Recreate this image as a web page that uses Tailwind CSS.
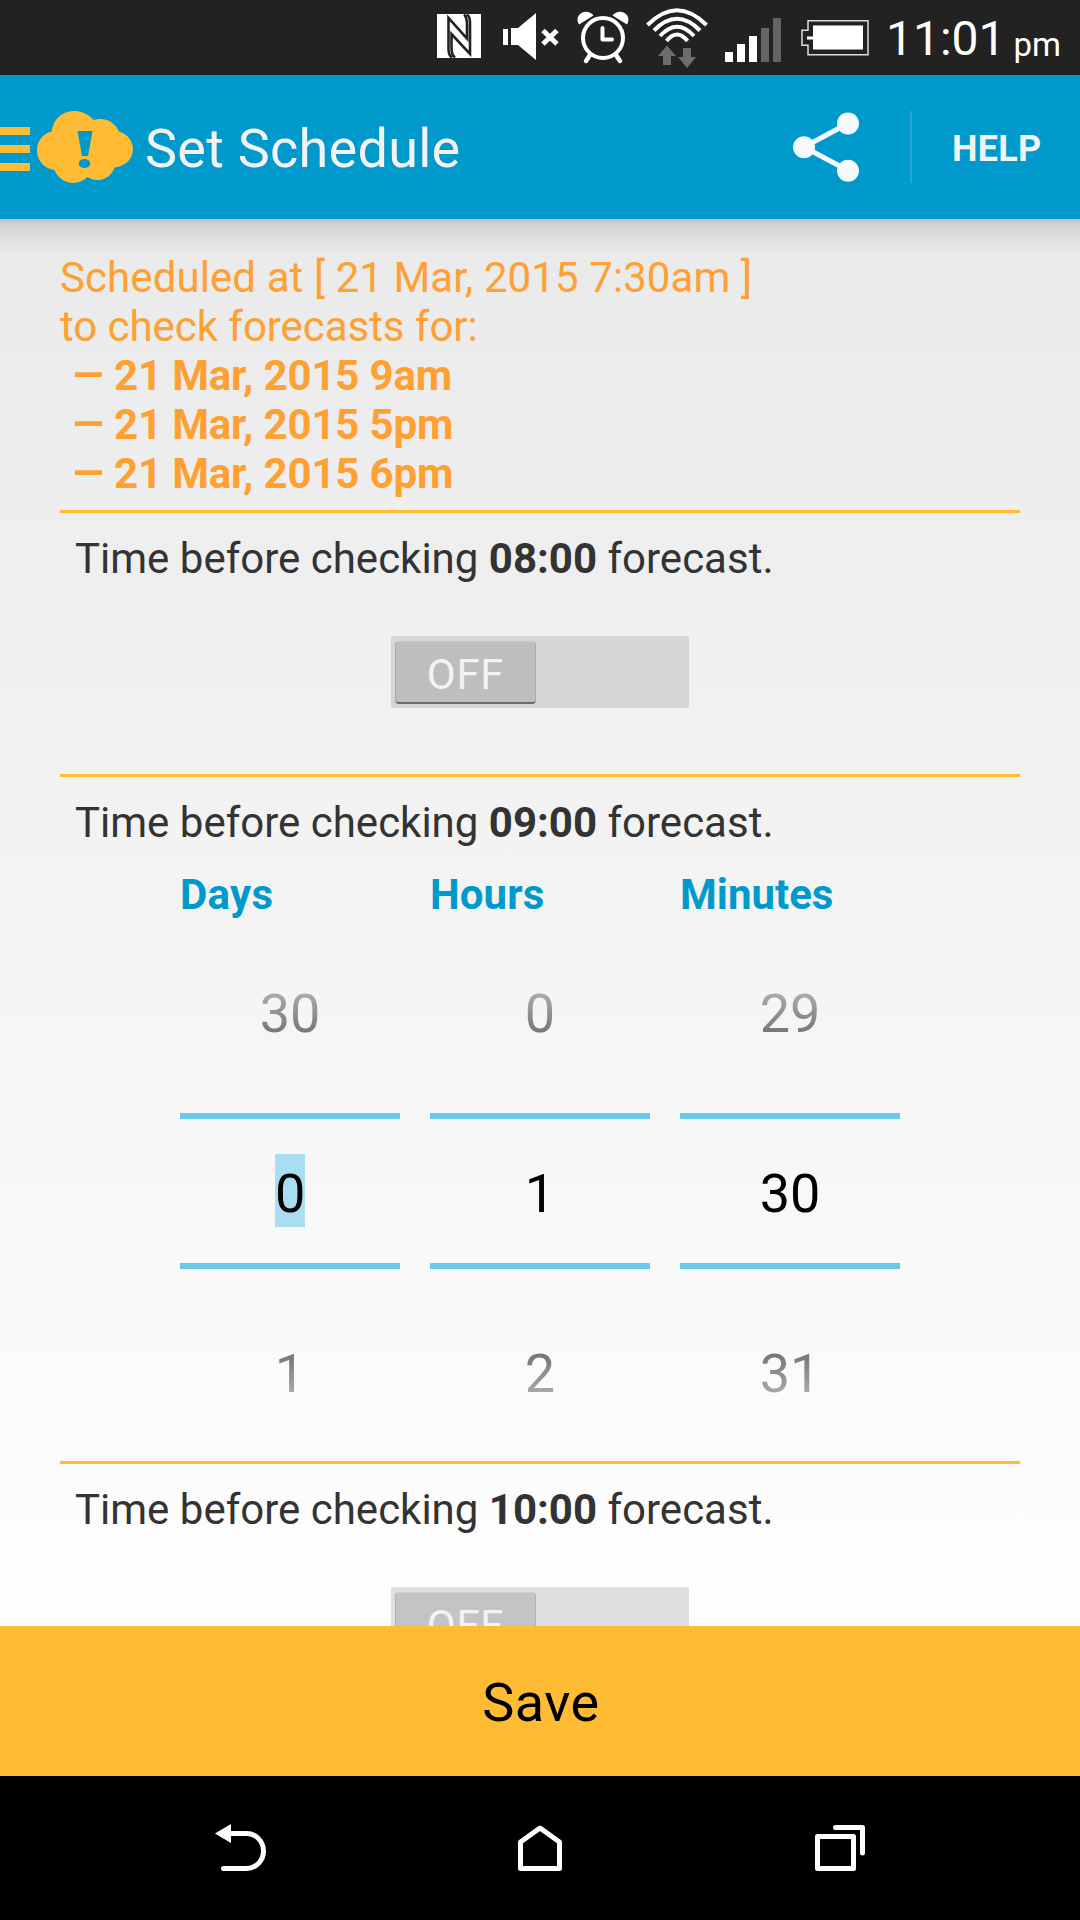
<!DOCTYPE html>
<html lang="en">
<head>
<meta charset="utf-8">
<title>Set Schedule</title>
<script src="https://cdn.jsdelivr.net/npm/@tailwindcss/browser@4"></script>
</head>
<body class="w-[1080px] h-[1920px] overflow-hidden flex flex-col font-['Roboto',sans-serif] text-[42px] leading-[49px] whitespace-nowrap">

<!-- Status bar -->
<header class="h-[75px] shrink-0 bg-[#222] text-white flex items-start">
  <svg class="w-[346px] h-[75px] ml-[437px] shrink-0" viewBox="437 0 346 75" fill="#fff">
    <rect x="437" y="14" width="44" height="44"/>
    <path d="M452 57.500Q448.500 55.500 448.500 49V18L467 38.500V25Q467 17 464 14.500M467 14.500Q470 16.500 470 23V54L451.500 34V48Q451.500 55 455 57.500" fill="none" stroke="#222" stroke-width="2.600"/>
    <path d="M503 29h5v16h-5zM511 28h7L536 13v47L518 45h-7z"/>
    <path d="M543 30.500l14 13.500M557 30.500L543 44" stroke="#fff" stroke-width="5"/>
    <circle cx="603" cy="38" r="20" fill="none" stroke="#fff" stroke-width="4"/>
    <path d="M579 24.500C573 14 587 7 593.500 15.500ZM627 24.500C633 14 619 7 612.500 15.500Z"/>
    <path d="M590 55l-4 6M616 55l4 6" stroke="#fff" stroke-width="4.500" stroke-linecap="round"/>
    <path d="M602.500 28v11.500H612" fill="none" stroke="#fff" stroke-width="4" stroke-linecap="round" stroke-linejoin="round"/>
    <g fill="none" stroke="#fff" stroke-width="4">
      <path d="M647.500 25Q677 -4.500 706.500 25"/><path d="M654 30.500Q677 7 700 30.500"/><path d="M660 36Q677 17.500 694 36"/><path d="M666.500 41Q677 28 687.500 41"/>
    </g>
    <path d="M667 45.500L676 56h-5v9h-8v-9h-5zM683 48h8v9h5l-9 11-9-11h5z" fill="#6d6d6d"/>
    <path d="M725 52h8v10h-8zM737 44h8v18h-8zM749 36h8v26h-8z"/>
    <path d="M761 28h8v34h-8zM773 18h8v44h-8z" fill="#646464"/>
  </svg>
  <svg class="w-[68px] h-[36px] mt-5 ml-[18px] shrink-0" viewBox="801 20 68 36">
    <path d="M808 20.700h60v34h-60v-9.500h-6v-15h6z" fill="none" stroke="#ddd" stroke-width="1.500"/>
    <path d="M813 25.500h50v24h-50v-10h-6v-3h6z" fill="#fff"/>
  </svg>
  <div class="text-[48px] leading-[56px] pt-[11px] ml-[17px]">11:01</div>
  <div class="text-[33px] leading-[42px] pt-[24px] ml-[8px]">pm</div>
</header>

<!-- Action bar -->
<div class="h-[144px] shrink-0 bg-[#0099cc] flex items-center text-[#f3f3f3]">
  <svg class="w-[134px] h-[72px] shrink-0" viewBox="0 111 134 72" fill="#ffbb33">
    <path d="M0 127h30v8H0zM0 145h30v8H0zM0 163h30v8H0z"/>
    <path d="M51.700 131.500C53 119 62 111 74.500 111C82 111 89 114.500 93.500 120C104 117 114.500 121 119 131.500C127 133.500 133 141 133 149C133 159 125 166.500 114.500 167.500C111 179 97.500 183.500 87.500 177C77 187 60 184 54.500 170C45 169 37 161 37 150C37 141 43 133.500 51.700 131.500Z"/>
    <path d="M77.500 131h15L88 156h-6z" fill="#0099cc"/><ellipse cx="84.500" cy="163.500" rx="5.700" ry="4.600" fill="#0099cc"/>
  </svg>
  <h1 class="text-[54px] leading-[64px] tracking-[0.25px] ml-[11px] pt-[4px] grow">Set Schedule</h1>
  <svg class="w-[66px] h-[70px] shrink-0" viewBox="793 112 66 70" fill="#f4fafe">
    <path d="M848 123.500L804 147L848 170.500" fill="none" stroke="#f4fafe" stroke-width="5"/>
    <circle cx="848" cy="123.500" r="11"/><circle cx="804" cy="147.200" r="11"/><circle cx="848" cy="170.700" r="11"/>
  </svg>
  <div class="w-[2px] h-[72px] ml-[51px] bg-[#27a6d3]"></div>
  <div class="w-[168px] pl-[40px] pt-[4px] text-[36px] leading-[42px] tracking-[0.3px] font-bold">HELP</div>
</div>

<!-- Schedule -->
<main class="h-[1407px] shrink-0 overflow-hidden relative bg-linear-to-b from-[#eaeaea] to-[#fefefe] text-[#333]">
  <div class="absolute inset-x-0 top-0 h-[3px] bg-[#c3c3c3]"></div>
  <div class="absolute inset-x-0 top-[3px] h-[36px] bg-linear-to-b from-black/12 via-black/4 to-black/0"></div>
  <div class="relative px-[60px] pt-[34px]">
    <div class="text-[#ffa033] h-[257px]">
      <p class="tracking-[0.09px]">Scheduled at [ 21 Mar, 2015 7:30am ]</p>
      <p class="tracking-[-0.05px]">to check forecasts for:</p>
      <ul class="font-bold pl-[11px] tracking-[-0.16px]">
        <li class="flex"><span class="w-[43px] origin-left scale-x-127">–</span>21 Mar, 2015 9am</li>
        <li class="flex"><span class="w-[43px] origin-left scale-x-127">–</span>21 Mar, 2015 5pm</li>
        <li class="flex"><span class="w-[43px] origin-left scale-x-127">–</span>21 Mar, 2015 6pm</li>
      </ul>
    </div>

    <section class="border-t-[3px] border-[#ffbb33] h-[264px] pt-[21px]">
      <p class="pl-[15px]">Time before checking <b>08:00</b> forecast.</p>
      <div class="mt-[53px] mx-auto w-[298px] h-[72px] bg-[#d6d6d6] pt-[5px] pl-1">
        <div class="w-[141px] h-[63px] rounded-[4px] bg-[#bebebe] border-x border-t border-x-[#aaa] border-t-[#c9c9c9] border-b-2 border-b-[#6c6c6c] text-[#f3f3f3] text-center tracking-[0.7px] pt-[8px]">OFF</div>
      </div>
    </section>

    <section class="border-t-[3px] border-[#ffbb33] h-[687px] pt-[21px]">
      <p class="pl-[15px]">Time before checking <b>09:00</b> forecast.</p>
      <div class="mt-[23px] px-[120px] flex gap-[30px] text-center text-[54px] leading-[64px] text-black">
        <div class="w-[220px]">
          <h2 class="text-[42px] leading-[49px] tracking-[0.3px] font-bold text-left text-[#0099cc]">Days</h2>
          <div class="mt-[63px] mb-[67px] bg-linear-to-b from-[#bbb] to-[#666] bg-clip-text text-transparent">30</div>
          <div class="h-[150px] border-t-6 border-[#6ac9e9] pt-[35px] flex justify-center"><span class="w-[30px] h-[73px] pt-[8px] bg-[#a9def2]">0</span></div>
          <div class="border-t-6 border-[#6ac9e9] pt-[73px]"><div class="bg-linear-to-b from-[#666] to-[#bbb] bg-clip-text text-transparent">1</div></div>
        </div>
        <div class="w-[220px]">
          <h2 class="text-[42px] leading-[49px] tracking-[0.1px] font-bold text-left text-[#0099cc]">Hours</h2>
          <div class="mt-[63px] mb-[67px] bg-linear-to-b from-[#bbb] to-[#666] bg-clip-text text-transparent">0</div>
          <div class="h-[150px] border-t-6 border-[#6ac9e9] pt-[43px]">1</div>
          <div class="border-t-6 border-[#6ac9e9] pt-[73px]"><div class="bg-linear-to-b from-[#666] to-[#bbb] bg-clip-text text-transparent">2</div></div>
        </div>
        <div class="w-[220px]">
          <h2 class="text-[42px] leading-[49px] font-bold text-left text-[#0099cc]">Minutes</h2>
          <div class="mt-[63px] mb-[67px] bg-linear-to-b from-[#bbb] to-[#666] bg-clip-text text-transparent">29</div>
          <div class="h-[150px] border-t-6 border-[#6ac9e9] pt-[43px]">30</div>
          <div class="border-t-6 border-[#6ac9e9] pt-[73px]"><div class="bg-linear-to-b from-[#666] to-[#bbb] bg-clip-text text-transparent">31</div></div>
        </div>
      </div>
    </section>

    <section class="border-t-[3px] border-[#ffbb33] h-[264px] pt-[21px]">
      <p class="pl-[15px]">Time before checking <b>10:00</b> forecast.</p>
      <div class="mt-[53px] mx-auto w-[298px] h-[72px] bg-[#dfdfdf] pt-[5px] pl-1">
        <div class="w-[141px] h-[63px] rounded-[4px] bg-[#c4c4c4] border-x border-t border-x-[#b0b0b0] border-t-[#cfcfcf] border-b-2 border-b-[#6c6c6c] text-[#f3f3f3] text-center tracking-[0.7px] pt-[8px]">OFF</div>
      </div>
    </section>
  </div>
</main>

<button class="h-[150px] shrink-0 bg-[#ffbb33] text-black text-[54px] leading-[64px] tracking-[0.5px] pt-[3px] pl-[2px]">Save</button>

<!-- Navigation bar -->
<nav class="h-[144px] shrink-0 bg-black flex items-center justify-between pl-[215px] pr-[214px]">
  <svg class="w-[52px] h-[48px]" viewBox="215 1824 52 48">
    <path d="M215 1833.500L231 1824v19z" fill="#fff"/>
    <path d="M230 1833.500h16.500a17 17.500 0 0 1 0 35H223.500" fill="none" stroke="#fff" stroke-width="5" stroke-linecap="round"/>
  </svg>
  <svg class="w-[47px] h-[48px]" viewBox="517 1824 47 48">
    <path d="M520.500 1842L540 1828L559.500 1842V1868.500H520.500Z" fill="none" stroke="#fff" stroke-width="5" stroke-linejoin="round"/>
  </svg>
  <svg class="w-[52px] h-[48px]" viewBox="814 1824 52 48" fill="none" stroke="#fff" stroke-width="5" stroke-linejoin="round">
    <path d="M817.500 1836.500h36v32h-36z"/>
    <path d="M835.500 1827.500h27v25.500" stroke-linecap="round"/>
  </svg>
</nav>
</body>
</html>
